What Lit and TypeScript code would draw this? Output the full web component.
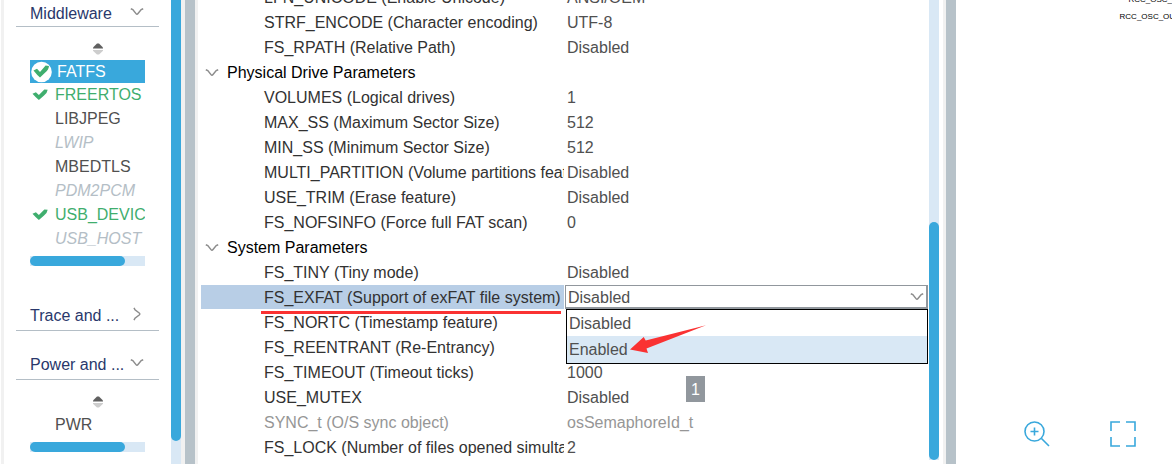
import { LitElement, html, css, svg, nothing } from "lit";
import { customElement, state } from "lit/decorators.js";
import { classMap } from "lit/directives/class-map.js";

type Item = { name: string; kind?: "on" | "off" | "selected" };
type Param = { name: string; value?: string; group?: boolean; editable?: boolean; muted?: boolean };

const middleware: Item[] = [
  { name: "FATFS", kind: "selected" },
  { name: "FREERTOS", kind: "on" },
  { name: "LIBJPEG" },
  { name: "LWIP", kind: "off" },
  { name: "MBEDTLS" },
  { name: "PDM2PCM", kind: "off" },
  { name: "USB_DEVICE", kind: "on" },
  { name: "USB_HOST", kind: "off" },
];

const params: Param[] = [
  { name: "LFN_UNICODE (Enable Unicode)", value: "ANSI/OEM" },
  { name: "STRF_ENCODE (Character encoding)", value: "UTF-8" },
  { name: "FS_RPATH (Relative Path)", value: "Disabled" },
  { name: "Physical Drive Parameters", group: true },
  { name: "VOLUMES (Logical drives)", value: "1" },
  { name: "MAX_SS (Maximum Sector Size)", value: "512" },
  { name: "MIN_SS (Minimum Sector Size)", value: "512" },
  { name: "MULTI_PARTITION (Volume partitions feat..", value: "Disabled" },
  { name: "USE_TRIM (Erase feature)", value: "Disabled" },
  { name: "FS_NOFSINFO (Force full FAT scan)", value: "0" },
  { name: "System Parameters", group: true },
  { name: "FS_TINY (Tiny mode)", value: "Disabled" },
  { name: "FS_EXFAT (Support of exFAT file system)", value: "Disabled", editable: true },
  { name: "FS_NORTC (Timestamp feature)", value: "" },
  { name: "FS_REENTRANT (Re-Entrancy)", value: "" },
  { name: "FS_TIMEOUT (Timeout ticks)", value: "1000" },
  { name: "USE_MUTEX", value: "Disabled" },
  { name: "SYNC_t (O/S sync object)", value: "osSemaphoreId_t", muted: true },
  { name: "FS_LOCK (Number of files opened simulta.", value: "2" },
];

const chevron = (dir: "down" | "right") => html`
  <svg class="chevron" width="14" height="14" viewBox="0 0 14 14" aria-hidden="true">
    ${dir === "down"
      ? svg`<path d="M0.8 3.8L2.8 4.6L6 8.6Q7 9.8 8 8.6L11.2 4.6L13.2 3.8" />`
      : svg`<path d="M4 0.8L5 2.8L9.2 6Q10.4 7 9.2 8L5 11.2L4 13.2" />`}
  </svg>`;

const tick = svg`<path d="M0.5 6.5L4 4.8L7 8L12.6 1.6L16 2Q15.6 6 12 8.8L7 13.5Q4 11 0.5 6.5Z" />`;

@customElement("category-panel")
export class CategoryPanel extends LitElement {
  static properties = { items: { attribute: false } };
  declare items: Item[];

  static styles = css`
    :host { display: block; padding: 16px 26px 0; }
    .sort { display: block; margin: 0 auto 5px; padding-left: 21px; }
    ul { margin: 0; padding: 0; list-style: none; overflow: hidden; }
    button {
      display: flex; align-items: center; width: 100%; height: 24px; padding: 0;
      border: 0; background: none; font: inherit; color: #505050; text-align: left; white-space: nowrap;
    }
    .icon { flex: none; width: 25px; height: 22px; }
    .icon path { fill: #3fae6e; }
    .on { color: #3fae6e; }
    .off { color: #b4bec6; font-style: italic; }
    .selected { height: 23px; color: #fff; background: #39a8dc; gap: 2px; }
    .track { height: 10px; margin-top: 5px; background: #d9e8f5; }
    .thumb { width: 95px; height: 10px; border-radius: 5px; background: #39a8dc; }
  `;

  icon(item: Item) {
    return html`<svg class="icon" viewBox="0 0 25 22" aria-hidden="true">
      ${item.kind === "selected"
        ? svg`<circle cx="11.5" cy="11" r="10.3" fill="#fff" /><g transform="translate(3 3)">${tick}</g>`
        : item.kind === "on" ? svg`<g transform="translate(2 4) scale(.98 .88)">${tick}</g>` : nothing}
    </svg>`;
  }

  render() {
    return html`
      <svg class="sort" width="10" height="12" viewBox="0 0 10 12" aria-hidden="true">
        <path fill="#606060" d="M0 4.6L4 0.6H6L10 4.6V5.4H0Z" />
        <path fill="#cdcdcd" d="M0 7H10V7.8L6 11.6H4L0 7.8Z" />
      </svg>
      <ul>
        ${this.items.map((i) => html`<li><button class=${i.kind ?? ""}>${this.icon(i)}${i.name}</button></li>`)}
      </ul>
      <div class="track"><div class="thumb"></div></div>`;
  }
}

@customElement("app-root")
export class AppRoot extends LitElement {
  @state() value = "Disabled";

  static styles = css`
    :host {
      display: flex; height: 100vh; overflow: hidden; background: #fff;
      font: 16px/24px "Liberation Sans", Arial, sans-serif; color: #323232;
    }
    * { box-sizing: border-box; }
    aside { display: flex; flex: none; width: 181px; border-left: 1px solid #fff; }
    .edge { flex: none; width: 3px; background: #f1f1f1; }
    .categories { flex: 1; min-width: 0; }
    .bar { flex: none; width: 10px; background: #d9e8f5; }
    .grip { border-radius: 5px; background: #39a8dc; }
    .side-grip { height: 95%; border-radius: 0 0 5px 5px; }
    .splitter { flex: none; width: 17px; background: #b7c2c9; border: solid #f1f1f1; border-width: 0 3px 0 4px; }
    .splitter.last { width: 13px; border-width: 0 0 0 3px; }
    .head {
      display: flex; justify-content: space-between; align-items: center; width: calc(100% - 24px);
      height: 31px; margin: 18px 12px 0; padding: 1px 15px 0 14px; border: 0;
      border-bottom: 1px solid #b4bec6; background: none; font: inherit; color: #29386b;
    }
    .head.first { height: 27px; margin-top: 0; }
    .head.trace { margin-top: 34px; }
    .head .chevron { margin-bottom: 4px; }
    .chevron { flex: none; fill: none; stroke: #8c8c8c; stroke-width: 1.5; }

    main { position: relative; display: flex; flex: 1; min-width: 0; overflow: hidden; }
    .sheet { flex: 1; min-width: 0; padding: 0 1px 0 3px; }
    table { width: 100%; margin-top: -15px; table-layout: fixed; border-collapse: collapse; }
    .col-name { width: 363px; }
    tr { height: 25px; }
    th, td { height: 25px; padding: 1px 0 0; font-weight: normal; text-align: left; white-space: nowrap; overflow: hidden; }
    th { padding-left: 63px; }
    td { padding-left: 3px; color: #505050; }
    .group th { padding-left: 4px; color: #000; }
    .group .chevron { margin-right: 8px; vertical-align: -2px; }
    .muted th, .muted td { color: #969696; }
    .selected th { background: linear-gradient(#b8cee6, #b8cee6) no-repeat 0 0 / 100% 24px; }
    .selected td { padding: 0 0 1px 1px; overflow: visible; }
    .combo { position: relative; height: 24px; }
    .combo select {
      display: block; width: 100%; height: 24px; padding: 0 2px; appearance: none; border: 1px solid #91979d;
      border-width: 1px 2px 2px 1px; border-radius: 0; background: #fff; color: #505050; font: inherit; outline: 0;
    }
    .combo > .chevron { position: absolute; right: 4px; top: 5px; }
    .options {
      position: absolute; z-index: 1; top: 24px; left: 1px; right: 0; margin: 0; padding: 0;
      list-style: none; border: 1px solid #000; background: #fff;
    }
    .options li { height: 26px; padding: 2px 2px 0; }
    .options li + li { height: 27px; background: #d9e8f5; }
    .underline { position: absolute; z-index: 2; left: 63px; top: 311px; width: 300px; height: 3px; background: #fa3232; }
    .arrow { position: absolute; z-index: 2; left: 63px; top: 15px; }
    .badge {
      position: absolute; z-index: 1; left: 488px; top: 376px; width: 19px; height: 26px;
      background: #91979d; color: #fff; text-align: center; line-height: 27px;
    }
    .scroll { display: flex; flex-direction: column; justify-content: flex-end; margin: 0 4px 4px 0; }
    .scroll .grip { height: 238px; }

    .canvas { display: flex; flex: none; flex-direction: column; justify-content: space-between; width: 216px; overflow: hidden; }
    .pins { margin: -9px -8px 0 0; color: #000; font-size: 8px; line-height: 17px; text-align: right; }
    .tools { display: flex; justify-content: flex-end; gap: 60px; padding: 0 36px 17px 0; }
    .tools button { display: block; padding: 0; border: 0; background: none; }
    .tools svg { display: block; fill: none; stroke: #39a8dc; stroke-width: 1.6; }
  `;

  head(label: string, dir: "down" | "right", cls = "") {
    return html`<button class="head ${cls}"><span>${label}</span>${chevron(dir)}</button>`;
  }

  combo() {
    return html`<div class="combo">
      <select id="exfat" .value=${this.value}
        @change=${(e: Event) => (this.value = (e.target as HTMLSelectElement).value)}>
        <option>Disabled</option>
        <option>Enabled</option>
      </select>
      ${chevron("down")}
      <ul class="options" role="listbox" aria-label="FS_EXFAT">
        <li role="option">Disabled</li>
        <li role="option">Enabled
          <svg class="arrow" width="78" height="30" viewBox="0 0 78 30" aria-hidden="true">
            <path fill="#fa3232" d="M0 24.5L13.7 12L15.7 15.5L76 0.3L16.5 23.5L18 28Z" />
          </svg>
        </li>
      </ul>
    </div>`;
  }

  row(p: Param) {
    if (p.group) return html`<tr class="group"><th colspan="2">${chevron("down")}${p.name}</th></tr>`;
    return html`<tr class=${classMap({ selected: !!p.editable, muted: !!p.muted })}>
      <th scope="row">${p.editable ? html`<label for="exfat">${p.name}</label>` : p.name}</th>
      <td>${p.editable ? this.combo() : p.value}</td>
    </tr>`;
  }

  render() {
    return html`
      <aside>
        <div class="edge"></div>
        <div class="categories">
          ${this.head("Middleware", "down", "first")}
          <category-panel .items=${middleware}></category-panel>
          ${this.head("Trace and ...", "right", "trace")}
          ${this.head("Power and ...", "down")}
          <category-panel .items=${[{ name: "PWR" }]}></category-panel>
        </div>
        <div class="bar"><div class="grip side-grip"></div></div>
      </aside>
      <div class="splitter"></div>
      <main>
        <div class="sheet">
          <table>
            <colgroup><col class="col-name" /><col /></colgroup>
            <tbody>${params.map((p) => this.row(p))}</tbody>
          </table>
        </div>
        <div class="bar scroll"><div class="grip"></div></div>
        <div class="underline"></div>
        <div class="badge">1</div>
      </main>
      <div class="splitter last"></div>
      <section class="canvas">
        <div class="pins"><div>RCC_OSC_IN</div><div>RCC_OSC_OUT</div></div>
        <div class="tools">
          <button aria-label="Zoom in">
            <svg width="26" height="26" viewBox="0 0 26 26">
              <circle cx="10.5" cy="10.5" r="9.5" /><path d="M10.5 6.5V14.5M6.5 10.5H14.5M17.5 17.5L25 25" />
            </svg>
          </button>
          <button aria-label="Fit to view">
            <svg width="26" height="26" viewBox="0 0 26 26">
              <path d="M1 10V1H10M16 1H25V10M25 16V25H16M10 25H1V16" />
            </svg>
          </button>
        </div>
      </section>`;
  }
}
